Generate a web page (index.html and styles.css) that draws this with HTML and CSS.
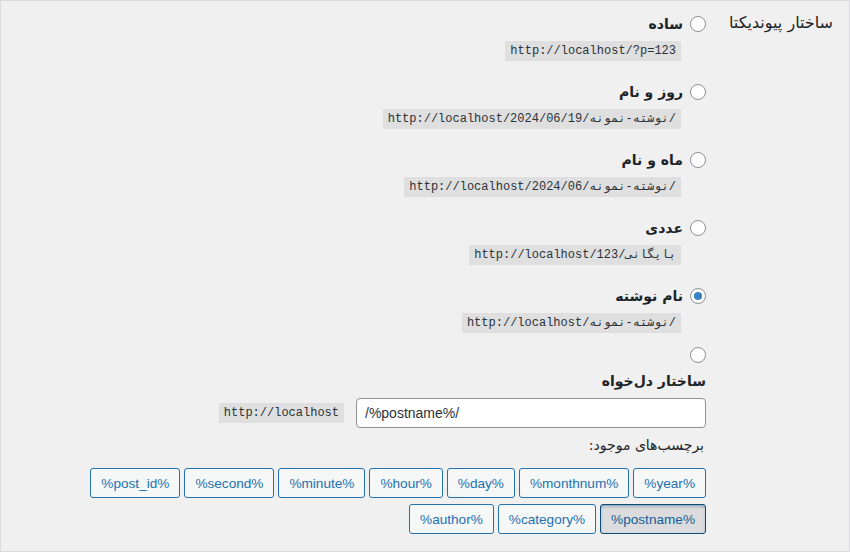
FILE: index.html
```html
<!DOCTYPE html>
<html lang="fa" dir="rtl">
<head>
<meta charset="UTF-8" />
<title>تنظیمات پیوندیکتا</title>
<link rel="stylesheet" href="styles.css">
</head>
<body>

<div class="wrap">
  <div class="form-table">
    <div class="th">ساختار پیوندیکتا</div>
    <div class="td">

      <div class="option">
        <label class="choice"><input type="radio" name="permalink" />ساده</label>
        <code>http://localhost/?p=123</code>
      </div>

      <div class="option">
        <label class="choice"><input type="radio" name="permalink" />روز و نام</label>
        <code>http://localhost/2024/06/19/نوشته-نمونه/</code>
      </div>

      <div class="option">
        <label class="choice"><input type="radio" name="permalink" />ماه و نام</label>
        <code>http://localhost/2024/06/نوشته-نمونه/</code>
      </div>

      <div class="option">
        <label class="choice"><input type="radio" name="permalink" />عددی</label>
        <code>http://localhost/بایگانی/123</code>
      </div>

      <div class="option">
        <label class="choice"><input type="radio" name="permalink" checked />نام نوشته</label>
        <code>http://localhost/نوشته-نمونه/</code>
      </div>

      <div class="option custom">
        <input type="radio" name="permalink" />
        <label class="custom-label">ساختار دل‌خواه</label>
        <div class="custom-row">
          <input class="regular-text" type="text" dir="ltr" value="/%postname%/" />
          <code>http://localhost</code>
        </div>
        <p class="tags-title">برچسب‌های موجود:</p>
        <ul class="tags">
          <li><button class="tag">%year%</button></li>
          <li><button class="tag">%monthnum%</button></li>
          <li><button class="tag">%day%</button></li>
          <li><button class="tag">%hour%</button></li>
          <li><button class="tag">%minute%</button></li>
          <li><button class="tag">%second%</button></li>
          <li><button class="tag">%post_id%</button></li>
          <li><button class="tag active">%postname%</button></li>
          <li><button class="tag">%category%</button></li>
          <li><button class="tag">%author%</button></li>
        </ul>
      </div>

    </div>
  </div>
</div>

</body>
</html>
```

FILE: styles.css
```css
* {
  margin: 0; padding: 0; box-sizing: border-box;
}
body {
  background: #f0f0f1;
  color: #1d2327;
  font-family: "DejaVu Sans", sans-serif;
  font-size: 13px;
}
.wrap {
  height: 552px;
  border: 1px solid #dcdcde;
  padding: 11px 16px 0 19px;
}
.form-table {
  display: grid;
  grid-template-columns: 127px 1fr;
}
.th {
  font-size: 16px;
  line-height: 22px;
  font-weight: normal;
}
.td {
  display: flex;
  flex-direction: column;
  align-items: flex-start;
}
.option {
  display: flex;
  flex-direction: column;
  align-items: flex-start;
  margin-bottom: 19px;
}
.choice {
  display: flex;
  align-items: center;
  gap: 7px;
  height: 24px;
  font-size: 14px;
  font-weight: bold;
  margin-bottom: 5px;
}
input[type="radio"] {
  appearance: none;
  width: 16px;
  height: 16px;
  border: 1px solid #8c8f94;
  border-radius: 50%;
  background: #fff;
  display: grid;
  place-items: center;
  margin: 0;
}
input[type="radio"]:checked::before {
  content: "";
  width: 8px;
  height: 8px;
  border-radius: 50%;
  background: #3582c4;
}
code {
  display: inline-block;
  direction: ltr;
  unicode-bidi: embed;
  background: rgba(0,0,0,0.07);
  padding: 3px 5px 2px;
  font-family: "Liberation Mono", "DejaVu Sans Mono", monospace;
  font-size: 12px;
  line-height: 15px;
  color: #2c3338;
}
.option > code {
  margin-right: 25px;
}
.custom {
  margin-top: -5px;
}
.custom-label {
  font-size: 14px;
  font-weight: bold;
  line-height: 20px;
  margin-top: 8px;
}
.custom-row {
  display: flex;
  align-items: center;
  gap: 12px;
  margin-top: 7px;
}
.regular-text {
  width: 350px;
  height: 30px;
  border: 1px solid #8c8f94;
  border-radius: 4px;
  background: #fff;
  padding: 0 8px;
  font-family: "Liberation Sans", sans-serif;
  font-size: 14px;
  color: #2c3338;
}
.tags-title {
  margin-top: 8px;
  margin-right: 2px;
  line-height: 18px;
  font-size: 14px;
}
.tags {
  list-style: none;
  display: flex;
  flex-wrap: wrap;
  gap: 6px 4px;
  margin-top: 14px;
  max-width: 687px;
}
.tag {
  height: 30px;
  padding: 0 10px;
  border: 1px solid #2271b1;
  border-radius: 3px;
  background: #f6f7f7;
  color: #2271b1;
  font-family: "Liberation Sans", sans-serif;
  font-size: 13.6px;
  cursor: pointer;
}
.tag.active {
  background: #dcdcde;
  border-color: #0a4b78;
  color: #135e96;
  box-shadow: inset 0 2px 5px -3px #0a4b78;
}
```
